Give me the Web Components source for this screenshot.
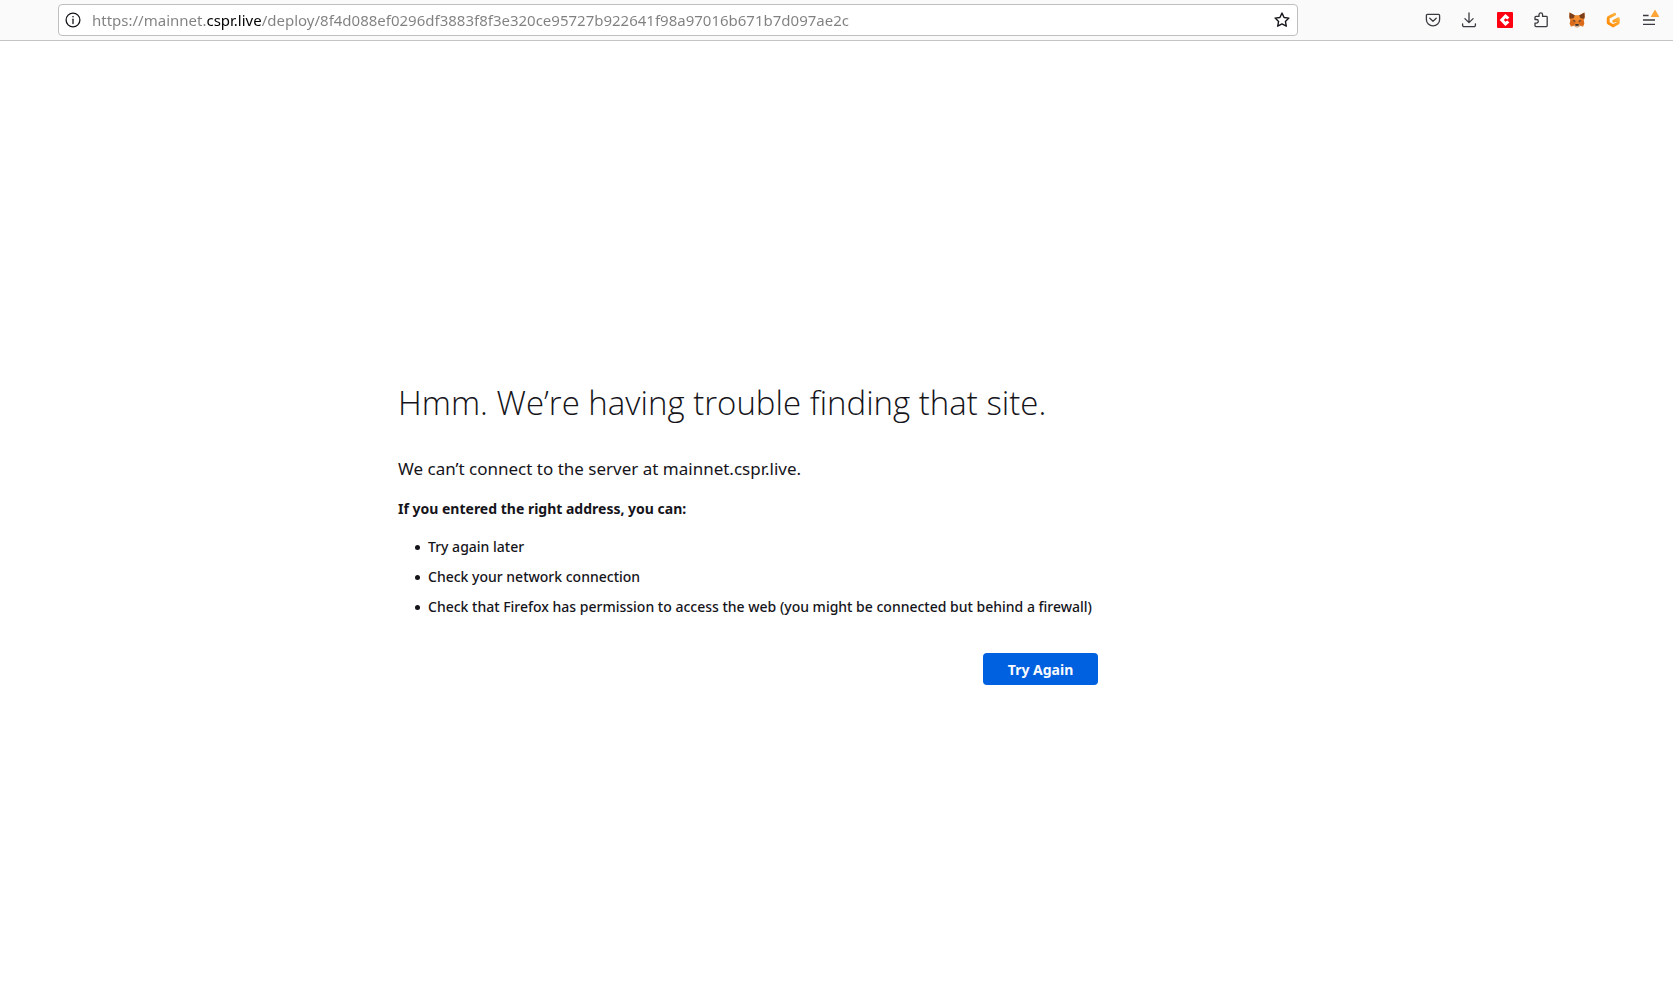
<!DOCTYPE html>
<html lang="en">
<head>
<meta charset="utf-8">
<title>Server Not Found</title>
<style>
  html, body { margin: 0; height: 100%; }
  body { background: #fff; color: #15141a; font: 14px/30px "Noto Sans", "Open Sans", sans-serif; }
</style>
</head>
<body>
<browser-window>
  <nav-toolbar slot="toolbar">
    <url-bar slot="address" scheme="https://mainnet." domain="cspr.live" path="/deploy/8f4d088ef0296df3883f8f3e320ce95727b922641f98a97016b671b7d097ae2c"></url-bar>
    <tool-button label="Save to Pocket" icon="pocket"></tool-button>
    <tool-button label="Downloads" icon="download"></tool-button>
    <tool-button label="Casper Signer" icon="casper"></tool-button>
    <tool-button label="Extensions" icon="puzzle"></tool-button>
    <tool-button label="MetaMask" icon="fox"></tool-button>
    <tool-button label="Gitpod" icon="gitpod"></tool-button>
    <tool-button label="Open application menu" icon="menu"></tool-button>
  </nav-toolbar>
  <error-page>
    <span slot="title">Hmm. We’re having trouble finding that site.</span>
    <span slot="lead">We can’t connect to the server at mainnet.cspr.live.</span>
    <span slot="hint">If you entered the right address, you can:</span>
    <span slot="tip-1">Try again later</span>
    <span slot="tip-2">Check your network connection</span>
    <span slot="tip-3">Check that Firefox has permission to access the web (you might be connected but behind a firewall)</span>
    <span slot="action">Try Again</span>
  </error-page>
</browser-window>

<script>
const svg = (body, size = 16) =>
  `<svg viewBox="0 0 16 16" width="${size}" height="${size}" fill="none" stroke="currentColor" stroke-linecap="round" stroke-linejoin="round" aria-hidden="true">${body}</svg>`;

const ICONS = {
  info: svg('<circle cx="8" cy="8" r="6.9" stroke-width="1.3"/><path d="M8 7.2v4.3" stroke-width="1.3"/><circle cx="8" cy="4.8" r=".8" fill="currentColor" stroke="none"/>'),
  star: svg('<path stroke-width="1.4" d="M8 1.1l2.1 4.4 4.8.6-3.5 3.3.9 4.8L8 11.9l-4.3 2.3.9-4.8L1.1 6.1l4.8-.6z"/>'),
  pocket: svg('<path stroke-width="1.3" d="M2.4 2.4h11.2a1 1 0 0 1 1 1v4.3a6.6 6.2 0 0 1-13.2 0V3.4a1 1 0 0 1 1-1z"/><path stroke-width="1.3" d="M4.8 6.2L8 9.2l3.2-3"/>'),
  download: svg('<path stroke-width="1.3" d="M8 .9v9.5M3.9 6.6L8 10.6l4.1-4M1.6 11.8v1.4a1.4 1.4 0 0 0 1.4 1.4h10a1.4 1.4 0 0 0 1.4-1.4v-1.4"/>'),
  casper: svg('<rect width="16" height="16" rx="1" fill="#ff0012" stroke="none"/><path fill="#fff" stroke="none" d="M8.4 2l4 3.6-2.1 2-1.9-1.4L6.9 8l1.5 1.8 1.9-1.4 2.1 2-4 3.6L2.7 8z"/>'),
  puzzle: svg('<path stroke-width="1.3" d="M2 5.4a1 1 0 0 1 1-1h3V2.7a1.8 1.8 0 0 1 3.6 0v1.7h3.8a.8.8 0 0 1 .8.8v8.6a.8.8 0 0 1-.8.8H3a1 1 0 0 1-1-1v-2.5h1.5a1.8 1.8 0 0 0 0-3.6H2z"/>'),
  fox: svg('<g stroke="none"><path fill="#e8812a" d="M.6.6L6 3.4h4L15.4.6l.3 5-1 3.2.7 2.8-1.3 3.2-3-1-1.8 1.4H6.7l-1.8-1.4-3 1-1.3-3.2.7-2.8-1-3.2z"/><path fill="#7b3f1b" d="M.6.6L6 3.6 4.4 6.2.8 6.8.3 4.4zM15.4.6L10 3.6l1.6 2.6 3.6.6.5-2.4z"/><path fill="#f28c2e" d="M6 3.4h4l1.4 4L8 8.8 4.6 7.4z"/><path fill="#d86a1c" d="M1.3 8.8l3.9-1.2 1.3 3.2-1.7 2.8-3-.4-.9-1.8zM14.7 8.8l-3.9-1.2-1.3 3.2 1.7 2.8 3-.4.9-1.8z"/><path fill="#33333d" d="M4.2 8l2 .7.3 1.1-2-.6zM11.8 8l-2 .7-.3 1.1 2-.6zM6.5 12h3l.4 1.7H6.1z"/><path fill="#cdbdb2" d="M4.9 13.6l1.3-.3.3.9h3l.3-.9 1.3.3-1.8 1.7H6.7z"/></g>'),
  gitpod: svg('<defs><linearGradient id="amber" x1="1" y1="0" x2="0" y2="1"><stop stop-color="#ffb84a"/><stop offset="1" stop-color="#ff8700"/></linearGradient></defs><path stroke="url(#amber)" stroke-width="2.9" d="M9.7 2.2L3.8 5.3a1 1 0 0 0-.6 1v4.1a1 1 0 0 0 .6.9l3.8 2.3a1.2 1.2 0 0 0 1.1 0l4-2.3a1 1 0 0 0 .6-.9V6.7L8.8 9.2"/>'),
  menu: svg('<path stroke-width="1.4" stroke-linecap="square" d="M2.7 3.5h4.2M2.7 8h10.6M2.7 12.4h10.6"/>')
};

/** Toolbar above a page area that fills the rest of the window. */
customElements.define('browser-window', class extends HTMLElement {
  constructor() {
    super();
    this.attachShadow({ mode: 'open' }).innerHTML = `
      <style>
        :host { display: flex; flex-direction: column; min-height: 100%; }
        main { flex: 1; display: flex; }
        ::slotted(error-page) { flex: 1; }
      </style>
      <slot name="toolbar"></slot>
      <main><slot></slot></main>`;
  }
});

customElements.define('nav-toolbar', class extends HTMLElement {
  constructor() {
    super();
    this.attachShadow({ mode: 'open' }).innerHTML = `
      <style>
        :host { display: block; background: #fafafa; border-bottom: 1px solid #c4c4c4; }
        header { display: flex; align-items: center; height: 40px; padding: 0 6px 0 58px; box-sizing: border-box; }
        .address { flex: 1; min-width: 0; margin-right: 117px; }
        .tools { display: flex; }
      </style>
      <header>
        <div class="address"><slot name="address"></slot></div>
        <div class="tools"><slot></slot></div>
      </header>`;
  }
});

/** Address field: the registrable domain is drawn dark, the rest of the address dimmed. */
customElements.define('url-bar', class extends HTMLElement {
  constructor() {
    super();
    this.attachShadow({ mode: 'open' }).innerHTML = `
      <style>
        :host { display: block; }
        form { display: flex; align-items: center; height: 32px; box-sizing: border-box; margin: 0;
               border: 1px solid #bfbfbf; border-radius: 4px; background: #fff; }
        button { display: grid; place-items: center; width: 30px; height: 30px; padding: 0; border: 0; background: none; color: #15141a; }
        button:first-child { width: 28px; }
        input { flex: 1; min-width: 0; height: 30px; padding: 0 0 0 5px; border: 0; outline: 0;
                font: 15px "Noto Sans", sans-serif; color: #000;
                background-origin: content-box; background-clip: text; -webkit-background-clip: text; -webkit-text-fill-color: transparent; }
      </style>
      <form>
        <button type="button" aria-label="Site information">${ICONS.info}</button>
        <input type="text" aria-label="Address" spellcheck="false">
        <button type="button" aria-label="Bookmark this page">${ICONS.star}</button>
      </form>`;
  }
  connectedCallback() {
    const [scheme, domain, path] = ['scheme', 'domain', 'path'].map(n => this.getAttribute(n));
    const input = this.shadowRoot.querySelector('input');
    input.value = scheme + domain + path;
    const pen = document.createElement('canvas').getContext('2d');
    pen.font = '15px "Noto Sans", sans-serif';
    const from = Math.round(pen.measureText(scheme).width);
    const to = Math.round(pen.measureText(scheme + domain).width);
    input.style.backgroundImage =
      `linear-gradient(90deg, #808080 ${from}px, #000 ${from}px ${to}px, #808080 ${to}px)`;
  }
});

customElements.define('tool-button', class extends HTMLElement {
  connectedCallback() {
    if (this.shadowRoot) return;
    const icon = this.getAttribute('icon');
    this.attachShadow({ mode: 'open' }).innerHTML = `
      <style>
        :host { display: block; }
        button { position: relative; display: grid; place-items: center; width: 36px; height: 32px; padding: 0; border: 0; background: none; color: #3b3a40; }
        .badge { position: absolute; top: 6px; right: 8px; width: 8px; height: 7px; fill: #ffa436; }
      </style>
      <button type="button" aria-label="${this.getAttribute('label')}">
        ${ICONS[icon]}
        ${icon === 'menu' ? '<svg class="badge" viewBox="0 0 8 7" aria-hidden="true"><path d="M3.4.4a.7.7 0 0 1 1.2 0L8 6.2a.6.6 0 0 1-.5.8h-7a.6.6 0 0 1-.5-.8z"/></svg>' : ''}
      </button>`;
  }
});

customElements.define('error-page', class extends HTMLElement {
  constructor() {
    super();
    this.attachShadow({ mode: 'open' }).innerHTML = `
      <style>
        :host { display: flex; align-items: center; justify-content: center; }
        .frame { width: 100%; max-width: 877px; padding-top: 44px; }
        .column { max-width: 704px; }
        h1 { margin: 0 0 31px; font: 300 33px/40px "Open Sans", "Noto Sans", sans-serif; }
        .lead { margin: 0 0 10px; font-size: 17px; }
        h2 { margin: 0 0 8px; font-size: 14px; line-height: 30px; font-weight: 700; }
        ul { margin: 0 0 31px; padding-left: 17px; font-weight: 500; list-style: none; }
        li { display: flex; align-items: center; gap: 8px; }
        li::before { content: ""; flex: none; width: 5px; height: 5px; border-radius: 50%; background: currentColor; }
        .actions { display: flex; justify-content: flex-end; padding-right: 4px; }
        button { min-width: 115px; height: 32px; padding: 0 24px; border: 0; border-radius: 4px;
                 background: #0061e0; color: #fbfbfe; font: 700 14px "Noto Sans", sans-serif; }
      </style>
      <div class="frame">
        <div class="column">
          <h1><slot name="title"></slot></h1>
          <p class="lead"><slot name="lead"></slot></p>
          <h2><slot name="hint"></slot></h2>
          <ul>
            <li><slot name="tip-1"></slot></li>
            <li><slot name="tip-2"></slot></li>
            <li><slot name="tip-3"></slot></li>
          </ul>
          <div class="actions"><button type="button"><slot name="action"></slot></button></div>
        </div>
      </div>`;
  }
});
</script>
</body>
</html>
